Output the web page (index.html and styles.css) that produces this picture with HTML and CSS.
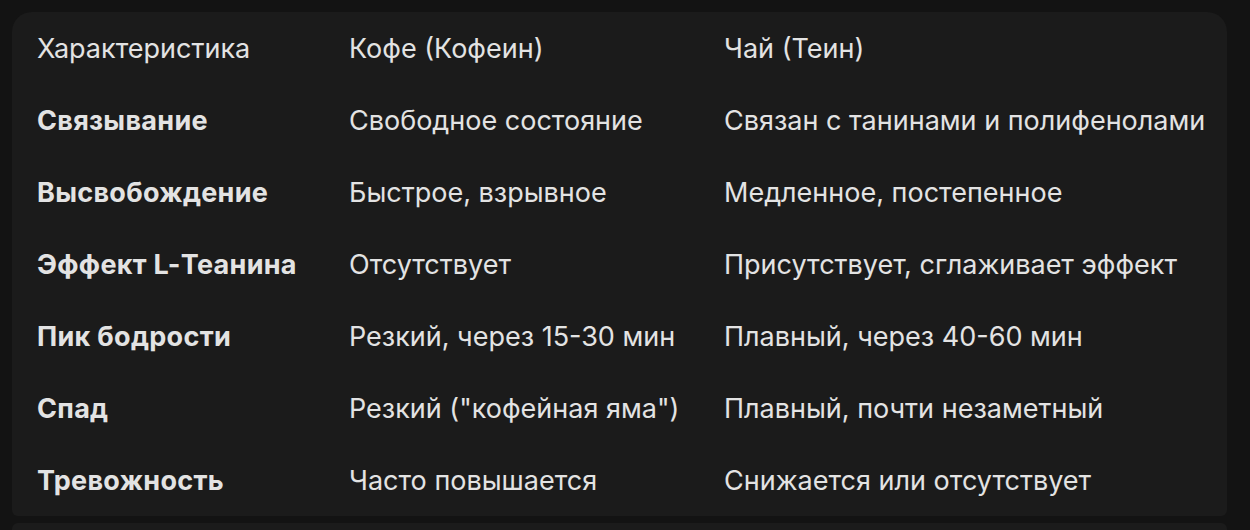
FILE: index.html
```html
<!DOCTYPE html>
<html lang="ru">
<head>
<meta charset="utf-8">
<link rel="stylesheet" href="styles.css">
</head>
<body>
<div class="page">
  <div class="card">
    <div class="table">
      <div class="cell head first">Характеристика</div>
      <div class="cell head">Кофе (Кофеин)</div>
      <div class="cell head">Чай (Теин)</div>

      <div class="cell first">Связывание</div>
      <div class="cell">Свободное состояние</div>
      <div class="cell">Связан с танинами и полифенолами</div>

      <div class="cell first">Высвобождение</div>
      <div class="cell">Быстрое, взрывное</div>
      <div class="cell">Медленное, постепенное</div>

      <div class="cell first">Эффект L-Теанина</div>
      <div class="cell">Отсутствует</div>
      <div class="cell">Присутствует, сглаживает эффект</div>

      <div class="cell first">Пик бодрости</div>
      <div class="cell">Резкий, через 15-30 мин</div>
      <div class="cell">Плавный, через 40-60 мин</div>

      <div class="cell first">Спад</div>
      <div class="cell">Резкий ("кофейная яма")</div>
      <div class="cell">Плавный, почти незаметный</div>

      <div class="cell first">Тревожность</div>
      <div class="cell">Часто повышается</div>
      <div class="cell">Снижается или отсутствует</div>
    </div>
  </div>
  <div class="card next"></div>
</div>
</body>
</html>
```

FILE: styles.css
```css
html, body {
  margin: 0;
  padding: 0;
  background: #131313;
  height: 530px;
  overflow: hidden;
}
.page {
  padding: 12px 23px 0 12px;
  display: flex;
  flex-direction: column;
  gap: 7px;
}
.card {
  background: #1b1b1b;
  border-radius: 20px 20px 6px 6px;
  padding: 0 0 0 25px;
}
.card.next {
  height: 7px;
  border-radius: 6px 6px 0 0;
}
.table {
  display: grid;
  grid-template-columns: 312px 375px 1fr;
  grid-auto-rows: 72px;
}
.cell {
  display: flex;
  align-items: center;
  font-family: "Inter", "Roboto", sans-serif;
  font-size: 27px;
  color: #e3e3e3;
  white-space: nowrap;
}
.cell.first {
  font-weight: 700;
  letter-spacing: 0.3px;
}
.cell.head {
  font-weight: 400;
  letter-spacing: 0;
}
```
